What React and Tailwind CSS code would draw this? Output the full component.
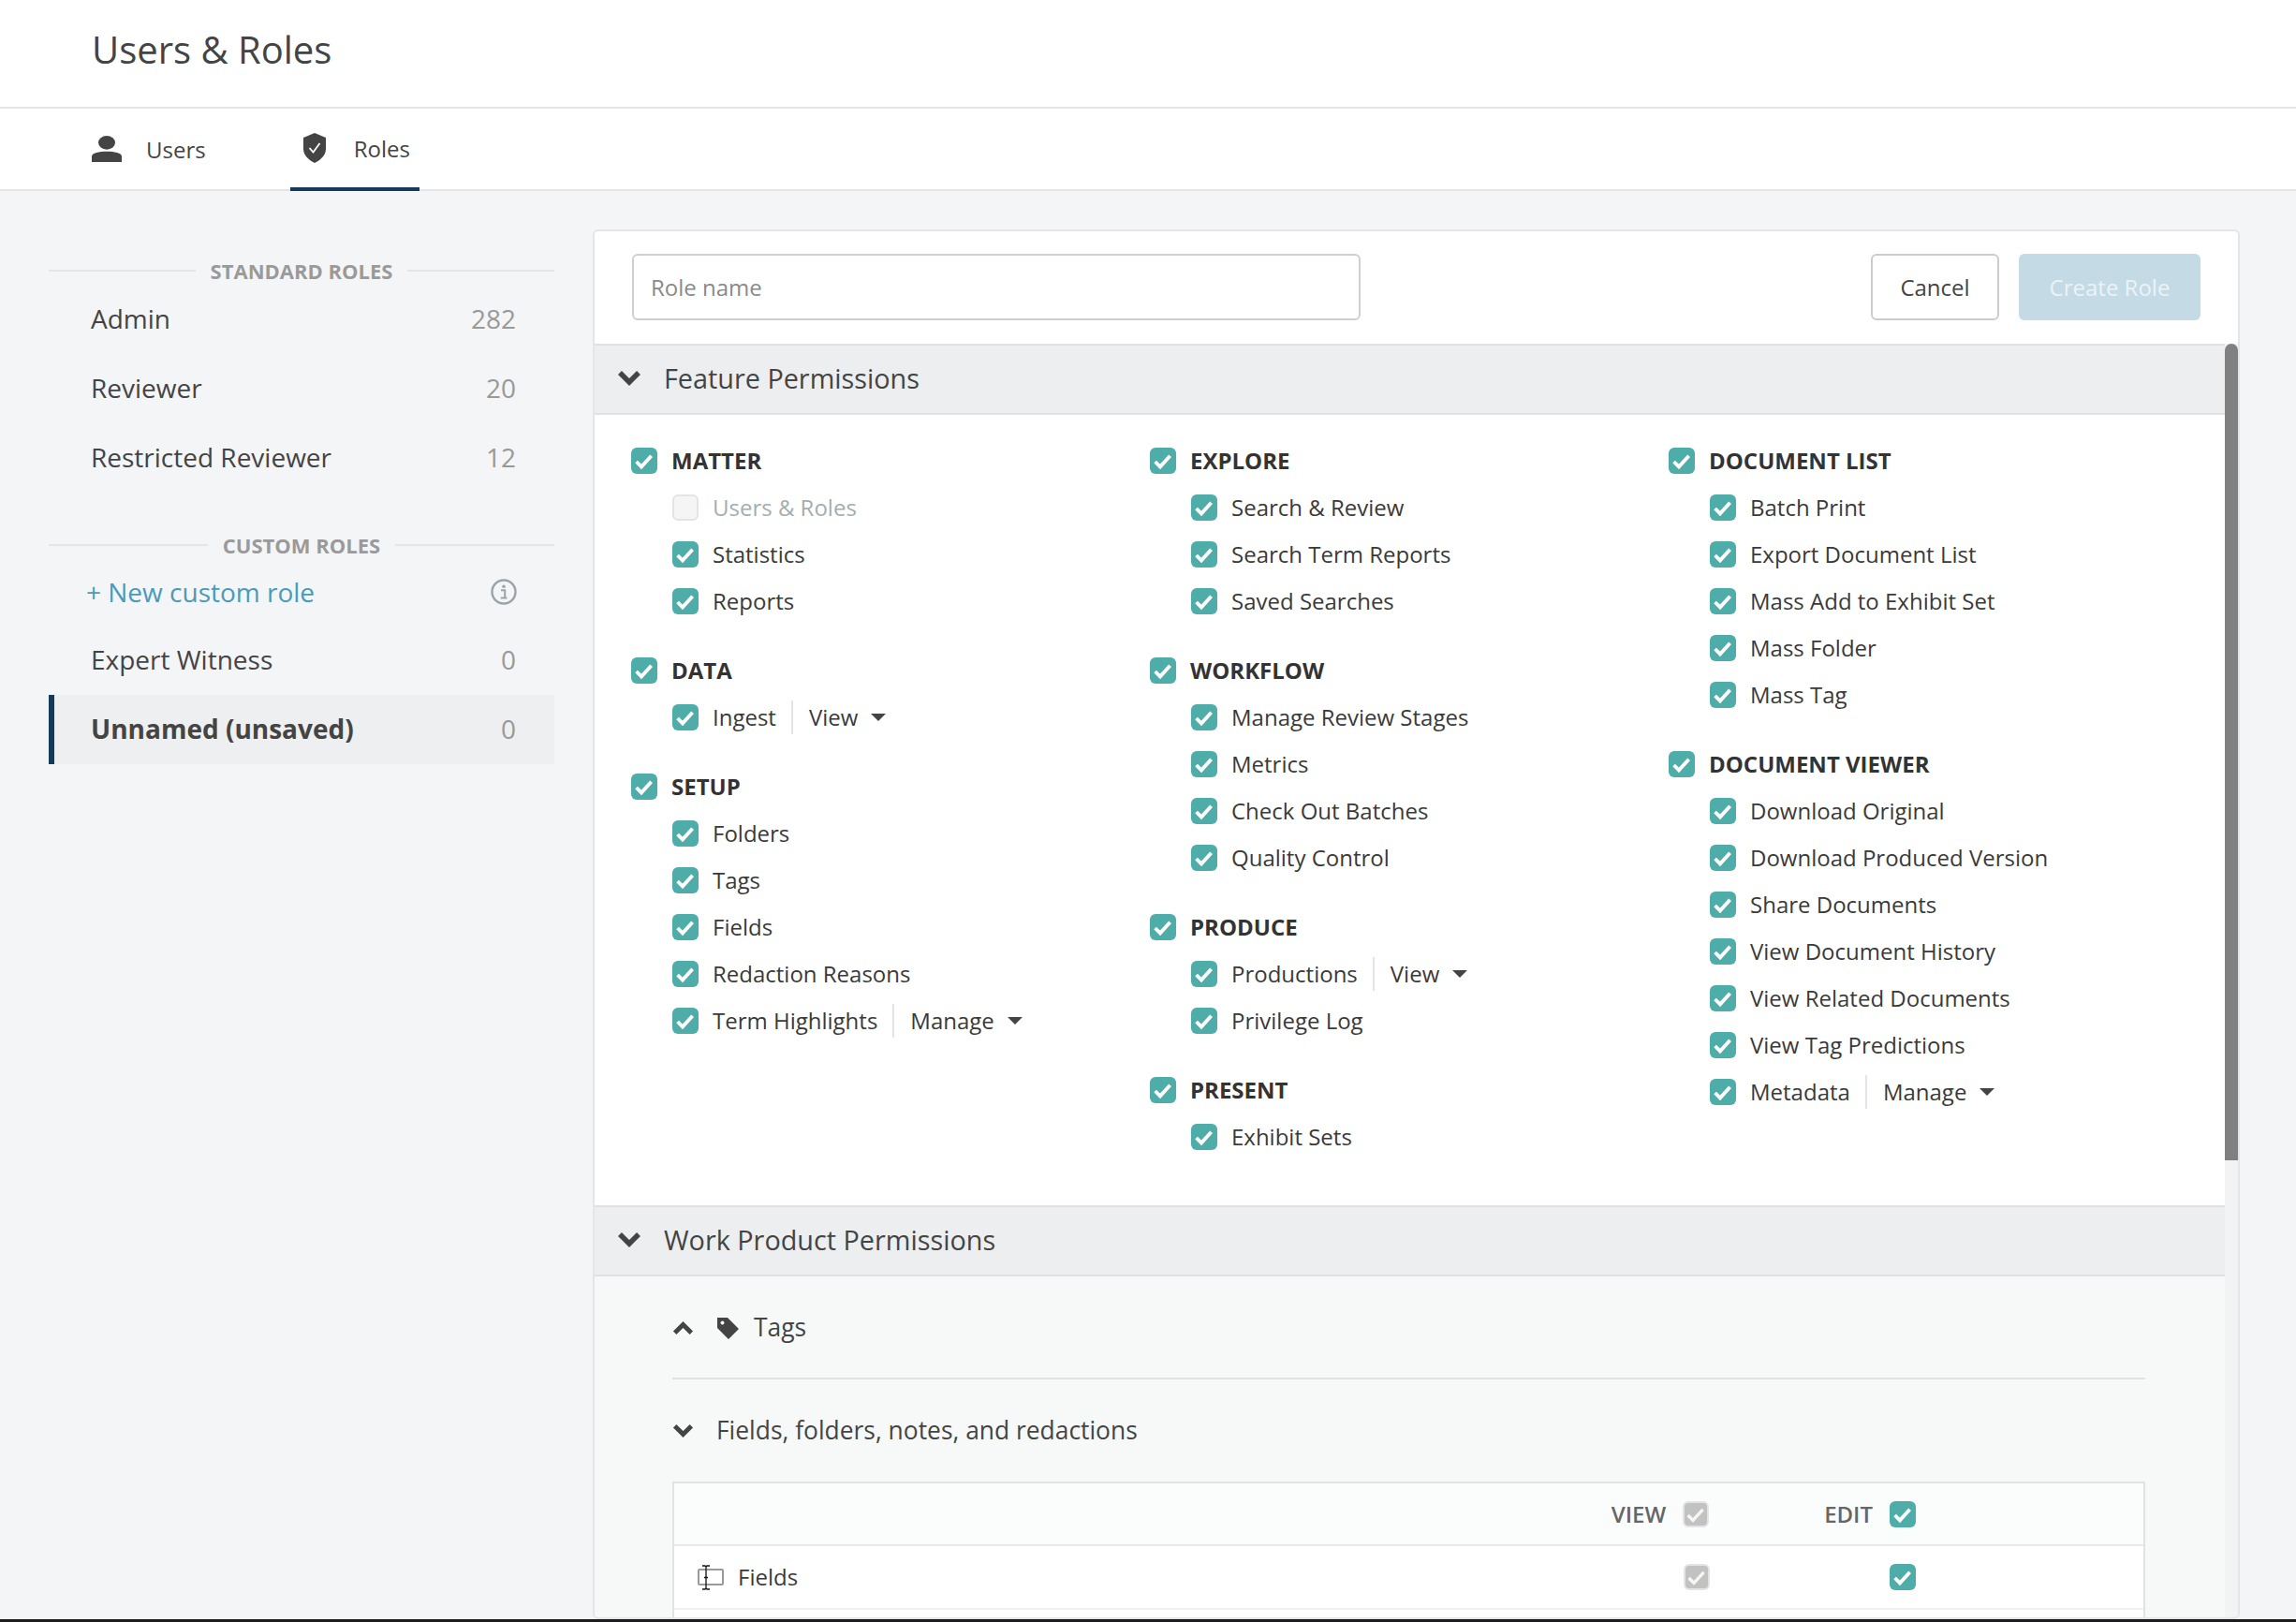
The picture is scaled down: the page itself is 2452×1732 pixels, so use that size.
import React from "react";

const Check = ({ color = "#fff", w = 3.8 }) => (
  <svg viewBox="0 0 28 28" className="w-7 h-7 block" fill="none">
    <path d="M5.6 15 L11 20.4 L21.6 8.8" stroke={color} strokeWidth={w} />
  </svg>
);

const Box = ({ kind = "on" }) => {
  if (kind === "empty")
    return <span className="block w-7 h-7 shrink-0 rounded-[6px] border-2 border-[#e3e4e5] bg-[#f5f5f5]" />;
  if (kind === "gray")
    return (
      <span className="block w-7 h-7 shrink-0 rounded-[6px] border-2 border-[#e3e4e5] bg-[#c2c2c2] overflow-hidden">
        <span className="block -m-[2px]"><Check color="#f7f7f0" w={3.4} /></span>
      </span>
    );
  return <span className="block w-7 h-7 shrink-0 rounded-[6px] bg-[#4fada9]"><Check /></span>;
};

const Chevron = ({ up, className }) => (
  <svg viewBox="0 0 26 18" className={className} fill="none">
    <path d={up ? "M3 15 L13 5 L23 15" : "M3 3 L13 13 L23 3"} stroke="#444" strokeWidth="5.5" />
  </svg>
);

const Caret = () => (
  <svg viewBox="0 0 16 8" className="w-4 h-2 ml-[14px]"><path d="M0 0 H16 L8 8 Z" fill="#444" /></svg>
);

const groups = [
  [
    { t: "MATTER", items: [["Users & Roles", null, true], ["Statistics"], ["Reports"]] },
    { t: "DATA", items: [["Ingest", "View"]] },
    { t: "SETUP", items: [["Folders"], ["Tags"], ["Fields"], ["Redaction Reasons"], ["Term Highlights", "Manage"]] },
  ],
  [
    { t: "EXPLORE", items: [["Search & Review"], ["Search Term Reports"], ["Saved Searches"]] },
    { t: "WORKFLOW", items: [["Manage Review Stages"], ["Metrics"], ["Check Out Batches"], ["Quality Control"]] },
    { t: "PRODUCE", items: [["Productions", "View"], ["Privilege Log"]] },
    { t: "PRESENT", items: [["Exhibit Sets"]] },
  ],
  [
    { t: "DOCUMENT LIST", items: [["Batch Print"], ["Export Document List"], ["Mass Add to Exhibit Set"], ["Mass Folder"], ["Mass Tag"]] },
    { t: "DOCUMENT VIEWER", items: [["Download Original"], ["Download Produced Version"], ["Share Documents"], ["View Document History"], ["View Related Documents"], ["View Tag Predictions"], ["Metadata", "Manage"]] },
  ],
];

const Group = ({ g }) => (
  <div className="mb-6">
    <div className="h-[50px] flex items-center gap-[15px]">
      <Box />
      <span className="text-[24px] font-bold text-[#333]">{g.t}</span>
    </div>
    {g.items.map(([label, menu, off]) => (
      <div key={label} className="h-[50px] flex items-center gap-[15px] pl-[44px]">
        <Box kind={off ? "empty" : "on"} />
        <span className={off ? "text-[24px] text-[#a3adb2]" : "text-[24px] text-[#3a3a3a]"}>{label}</span>
        {menu && (
          <span className="flex items-center ml-[1px]">
            <span className="w-[2px] h-9 bg-[#e2e4e6] mr-[17px]" />
            <span className="text-[24px] text-[#3a3a3a]">{menu}</span>
            <Caret />
          </span>
        )}
      </div>
    ))}
  </div>
);

const SideLabel = ({ children, className = "" }) => (
  <div className={"h-[28px] flex items-center " + className}>
    <span className="flex-1 h-[2px] bg-[#e3e5e8]" />
    <span className="px-4 text-[22px] font-bold text-[#9a9a9a]">{children}</span>
    <span className="flex-1 h-[2px] bg-[#e3e5e8]" />
  </div>
);

const Role = ({ name, n, className = "" }) => (
  <div className={"h-[74px] flex items-center justify-between pl-[45px] pr-[41px] " + className}>
    <span className="text-[28px] text-[#444]">{name}</span>
    <span className="text-[28px] text-[#999]">{n}</span>
  </div>
);

const SectionHead = ({ children }) => (
  <div className="h-[76px] shrink-0 flex items-center bg-[#edeef0] border-y-2 border-[#dfe1e4] pl-[24px] pb-[2px]">
    <Chevron className="w-[26px] h-[18px] mr-[24px]" />
    <span className="text-[28.8px] text-[#444]">{children}</span>
  </div>
);

export default function App() {
  return (
    <div className="h-[1732px] flex flex-col overflow-hidden bg-[#f4f5f7] font-['Open_Sans',sans-serif]">
      <div className="h-[116px] shrink-0 bg-white border-b-2 border-[#e3e5e8] flex items-center pl-[98px] pb-2">
        <h1 className="text-[40px] text-[#444] font-normal">Users &amp; Roles</h1>
      </div>
      <div className="h-[88px] shrink-0 bg-white border-b-2 border-[#e3e5e8] flex pl-[98px]">
        <div className="flex items-center gap-[26px]">
          <svg viewBox="0 0 32 42" className="w-8 h-[28px]" fill="#444" preserveAspectRatio="none">
            <ellipse cx="16" cy="11" rx="9" ry="11" />
            <path d="M0 42 V33 C0 27 8 25 16 25 C24 25 32 27 32 33 V42 Z" />
          </svg>
          <span className="text-[24px] text-[#444] pt-[2px]">Users</span>
        </div>
        <div className="ml-[90px] w-[138px] h-[88px] border-b-4 border-[#143a5c] flex items-center pl-[14px] gap-[30px]">
          <svg viewBox="0 0 24 32" className="w-6 h-8 shrink-0">
            <path d="M12 0 L24 5 V17 C24 24 18 29 12 32 C6 29 0 24 0 17 V5 Z" fill="#444" />
            <path d="M6.5 16 L10.5 20.5 L17.5 11" stroke="#fff" strokeWidth="1.8" fill="none" />
          </svg>
          <span className="text-[24px] text-[#444] pt-[2px]">Roles</span>
        </div>
      </div>

      <div className="flex-1 min-h-0 flex pl-[52px]">
        <aside className="w-[540px] shrink-0 pt-[71px]">
          <SideLabel>STANDARD ROLES</SideLabel>
          <Role name="Admin" n="282" className="pb-[1px]" />
          <Role name="Reviewer" n="20" />
          <Role name="Restricted Reviewer" n="12" />
          <SideLabel className="mt-[43px]">CUSTOM ROLES</SideLabel>
          <div className="h-[72px] flex items-center justify-between pl-[40px] pr-[40px]">
            <span className="text-[28px] text-[#4a9aba]">+ New custom role</span>
            <svg viewBox="0 0 28 28" className="w-7 h-7" fill="none">
              <circle cx="14" cy="14" r="12.5" stroke="#9aa3a8" strokeWidth="2.4" />
              <circle cx="14" cy="8.2" r="1.8" fill="#9aa3a8" />
              <path d="M11 12.2 H15.2 V20 M10.8 20.4 H17.4" stroke="#9aa3a8" strokeWidth="2" />
            </svg>
          </div>
          <Role name="Expert Witness" n="0" className="pb-[2px]" />
          <div className="h-[74px] flex items-center justify-between pl-[39px] pr-[41px] pb-[2px] border-l-[6px] border-[#143a5c] bg-[#eeeff1]">
            <span className="text-[28px] font-bold text-[#444]">Unnamed (unsaved)</span>
            <span className="text-[28px] text-[#999]">0</span>
          </div>
        </aside>

        <section className="w-[1759px] ml-[41px] mt-[41px] flex flex-col border-2 border-[#e3e5e8] rounded-[6px] overflow-hidden">
          <div className="h-[120px] shrink-0 bg-white flex items-center pl-[40px] pr-[40px] pb-[2px]">
            <input
              readOnly
              placeholder="Role name"
              className="w-[778px] h-[71px] border-2 border-[#cfcfcf] rounded-[6px] bg-white px-[18px] text-[24px] placeholder:text-[#8a8a8a] outline-none"
            />
            <button className="ml-auto w-[137px] h-[71px] pt-[2px] border-2 border-[#cccccc] rounded-[6px] bg-white text-[24px] text-[#444]">Cancel</button>
            <button className="ml-[21px] w-[194px] h-[71px] pt-[2px] rounded-[6px] bg-[#c4dbe6] text-[24px] text-[#eaf3f7]">Create Role</button>
          </div>
          <div className="flex-1 min-h-0 flex overflow-hidden">
            <div className="flex-1 min-w-0 flex flex-col">
              <SectionHead>Feature Permissions</SectionHead>
              <div className="h-[844px] shrink-0 bg-white flex pl-[39px] pt-[24px]">
                {groups.map((col, i) => (
                  <div key={i} className="w-[554px]">
                    {col.map((g) => <Group key={g.t} g={g} />)}
                  </div>
                ))}
              </div>
              <SectionHead>Work Product Permissions</SectionHead>
              <div className="flex-1 bg-[#f7f9f9] pl-[83px] pr-[85px]">
                <div className="h-[110px] pt-[2px] flex items-center border-b-2 border-[#e0e2e3]">
                  <Chevron up className="w-[23px] h-4" />
                  <svg viewBox="0 0 25 24" className="w-[25px] h-6 ml-[24px] mr-[15px]" fill="#444">
                    <path fillRule="evenodd" d="M1 1 H12 L24 13 L13 24 L1 12 Z M6.5 4.5 a2 2 0 1 0 .01 0 Z" />
                  </svg>
                  <span className="text-[26.4px] text-[#444]">Tags</span>
                </div>
                <div className="h-[109px] pt-[1px] flex items-center">
                  <Chevron className="w-[23px] h-4" />
                  <span className="ml-[24px] text-[26.4px] text-[#444]">Fields, folders, notes, and redactions</span>
                </div>
                <div className="border-x-2 border-t-2 border-[#e0e2e3]">
                  <div className="h-[67px] bg-[#fbfcfc] border-b-2 border-[#e8e9ea] flex items-center justify-end pr-[243px]">
                    <span className="text-[24px] font-semibold text-[#666]">VIEW</span>
                    <span className="ml-[18px]"><Box kind="gray" /></span>
                    <span className="ml-[123px] text-[24px] font-semibold text-[#666]">EDIT</span>
                    <span className="ml-[18px]"><Box /></span>
                  </div>
                  <div className="h-[68px] bg-white border-b-2 border-[#f0f0f0] flex items-center pl-[25px] pr-[243px]">
                    <span className="relative w-[28px] h-[18px] border-2 border-[#9a9a9a] rounded-[2px] mr-[15px]">
                      <svg viewBox="0 0 10 27" className="absolute left-[2px] -top-[6px] w-[10px] h-[27px]" fill="none">
                        <path d="M1 1 H4 L5 2 L6 1 H9 M5 2 V25 M1 26 H4 L5 25 L6 26 H9 M3 13.5 H7" stroke="#111" strokeWidth="1.3" />
                      </svg>
                    </span>
                    <span className="text-[24px] text-[#3a3a3a]">Fields</span>
                    <span className="ml-auto"><Box kind="gray" /></span>
                    <span className="ml-[192px]"><Box /></span>
                  </div>
                  <div className="h-[68px] bg-white" />
                </div>
              </div>
            </div>
            <div className="w-[14px] shrink-0 bg-[#f2f3f5]">
              <div className="h-[872px] bg-[#808080] rounded-t-[7px]" />
            </div>
          </div>
        </section>
      </div>
      <div className="h-[3px] shrink-0 bg-[#1c1c1c]" />
    </div>
  );
}
